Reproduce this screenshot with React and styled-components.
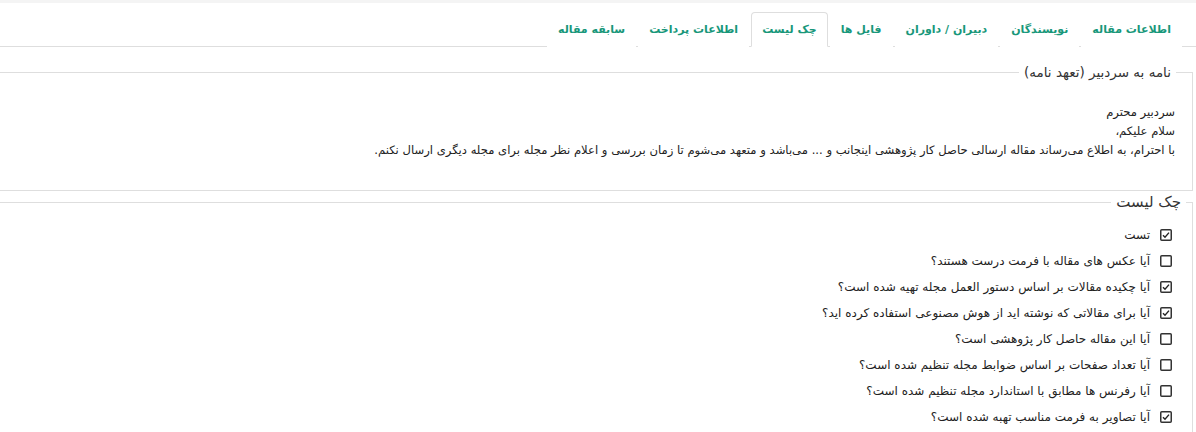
import React from "react";
import styled, { createGlobalStyle } from "styled-components";

const GlobalStyle = createGlobalStyle`
  html, body {
    margin: 0;
    padding: 0;
    background: #fff;
  }
  body {
    direction: rtl;
    font-family: "DejaVu Sans", Tahoma, sans-serif;
    color: #333;
    overflow: hidden;
  }
`;

const Page = styled.div`
  border-top: 3px solid #f4f4f4;
  min-height: 429px;
`;

const TabBar = styled.ul`
  display: flex;
  list-style: none;
  margin: 9px 0 0 0;
  padding: 0 14px 0 0;
  border-bottom: 1px solid #dedede;
`;

const Tab = styled.li`
  margin: 0 0 -1px 2px;
  padding: 9px 10px 9px;
  font-size: 11px;
  font-weight: bold;
  color: #18977a;
  line-height: 15px;
  border: 1px solid ${(p) => (p.$active ? "#dedede" : "transparent")};
  border-bottom-color: ${(p) => (p.$active ? "#fff" : "transparent")};
  border-radius: 4px 4px 0 0;
  background: #fff;
  cursor: pointer;
  white-space: nowrap;
`;

const Fieldset = styled.fieldset`
  margin: ${(p) => p.$top}px 3px 0 -6px;
  padding: ${(p) => p.$pad};
  border: 1px solid #dedede;
  min-width: 0;
`;

const Legend = styled.legend`
  font-size: ${(p) => p.$size}px;
  padding: 0 5px;
  margin-right: ${(p) => p.$offset}px;
  color: #333;
`;

const Letter = styled.div`
  padding-right: 17px;
  font-size: 11.6px;
  line-height: 19px;
  color: #222;
`;

const Items = styled.ul`
  list-style: none;
  margin: 0;
  padding: 0 20px 0 0;
  display: flex;
  flex-direction: column;
  gap: 8px;
`;

const Item = styled.li`
  display: flex;
  align-items: center;
  gap: 10px;
  font-size: 12px;
  line-height: 18px;
  color: #222;
`;

const Box = styled.svg`
  width: 12px;
  height: 12px;
  flex: none;
`;

const CheckBox = ({ checked }) => (
  <Box viewBox="0 0 12 12">
    <rect x="0.75" y="0.75" width="10.5" height="10.5" rx="1" fill="#fff" stroke="#333" strokeWidth="1.5" />
    {checked && <path d="M3 6.2 L5 8.2 L9 3.6" fill="none" stroke="#222" strokeWidth="1.4" />}
  </Box>
);

const tabs = [
  "اطلاعات مقاله",
  "نویسندگان",
  "دبیران / داوران",
  "فایل ها",
  "چک لیست",
  "اطلاعات پرداخت",
  "سابقه مقاله",
];

const checklist = [
  { text: "تست", checked: true },
  { text: "آیا عکس های مقاله با فرمت درست هستند؟", checked: false },
  { text: "آیا چکیده مقالات بر اساس دستور العمل مجله تهیه شده است؟", checked: true },
  { text: "آیا برای مقالاتی که نوشته اید از هوش مصنوعی استفاده کرده اید؟", checked: true },
  { text: "آیا این مقاله حاصل کار پژوهشی است؟", checked: false },
  { text: "آیا تعداد صفحات بر اساس ضوابط مجله تنظیم شده است؟", checked: false },
  { text: "آیا رفرنس ها مطابق با استاندارد مجله تنظیم شده است؟", checked: false },
  { text: "آیا تصاویر به فرمت مناسب تهبه شده است؟", checked: true },
];

export default function App() {
  return (
    <Page>
      <GlobalStyle />
      <TabBar>
        {tabs.map((t) => (
          <Tab key={t} $active={t === "چک لیست"}>
            {t}
          </Tab>
        ))}
      </TabBar>
      <Fieldset $top={17} $pad="23px 0 30px 17px">
        <Legend $size={13.5} $offset={16}>نامه به سردبیر (تعهد نامه)</Legend>
        <Letter>
          سردبیر محترم
          <br />
          سلام علیکم،
          <br />
          با احترام، به اطلاع می‌رساند مقاله ارسالی حاصل کار پژوهشی اینجانب و ... می‌باشد و متعهد می‌شوم تا زمان بررسی و اعلام نظر مجله برای مجله دیگری ارسال نکنم.
        </Letter>
      </Fieldset>
      <Fieldset $top={2} $pad="15px 0 40px 20px">
        <Legend $size={15} $offset={6}>چک لیست</Legend>
        <Items>
          {checklist.map((c) => (
            <Item key={c.text}>
              <CheckBox checked={c.checked} />
              {c.text}
            </Item>
          ))}
        </Items>
      </Fieldset>
    </Page>
  );
}
